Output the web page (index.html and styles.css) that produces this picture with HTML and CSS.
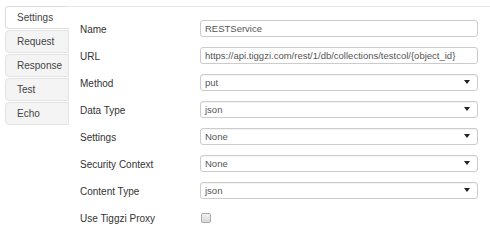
FILE: index.html
```html
<!DOCTYPE html>
<html lang="en">
<head>
    <meta charset="utf-8">
    <title>Service settings</title>
    <link rel="stylesheet" href="styles.css">
</head>
<body>
    <div class="editor">
        <ul class="tabs">
            <li class="tab active">Settings</li>
            <li class="tab">Request</li>
            <li class="tab">Response</li>
            <li class="tab">Test</li>
            <li class="tab">Echo</li>
        </ul>
        <div class="pane">
            <form class="settings">
                <label class="row">
                    <span class="name">Name</span>
                    <input class="field" type="text" value="RESTService">
                </label>
                <label class="row">
                    <span class="name">URL</span>
                    <input class="field" type="text" value="https://api.tiggzi.com/rest/1/db/collections/testcol/{object_id}">
                </label>
                <label class="row">
                    <span class="name">Method</span>
                    <span class="field select">put</span>
                </label>
                <label class="row">
                    <span class="name">Data Type</span>
                    <span class="field select">json</span>
                </label>
                <label class="row">
                    <span class="name">Settings</span>
                    <span class="field select">None</span>
                </label>
                <label class="row">
                    <span class="name">Security Context</span>
                    <span class="field select">None</span>
                </label>
                <label class="row">
                    <span class="name">Content Type</span>
                    <span class="field select">json</span>
                </label>
                <label class="row">
                    <span class="name">Use Tiggzi Proxy</span>
                    <span class="check"></span>
                </label>
            </form>
        </div>
    </div>
</body>
</html>
```

FILE: styles.css
```css
body {
    margin: 0;
    background: #fff;
    font-family: "Liberation Sans", Arial, sans-serif;
    font-size: 10px;
    color: #333;
}
.editor {
    display: flex;
    padding: 6px 0 0 5px;
}
.tabs {
    list-style: none;
    margin: 0;
    padding: 0;
    width: 64px;
    display: flex;
    flex-direction: column;
    gap: 1px;
}
.tab {
    height: 21px;
    line-height: 21px;
    padding-left: 11px;
    border: 1px solid #e3e3e3;
    border-radius: 4px 0 0 4px;
    background: #f4f4f4;
    color: #444;
}
.tab.active {
    background: #fff;
    border-color: #ddd;
    border-right-color: #fff;
    margin-right: -1px;
    position: relative;
}
.pane {
    flex: 1;
    border-top: 1px solid #e8e8e8;
    padding: 13px 12px 0 11px;
}
.settings {
    display: flex;
    flex-direction: column;
    gap: 10px;
}
.row {
    display: flex;
    align-items: center;
    height: 17px;
}
.name {
    width: 120px;
    padding-top: 1px;
    color: #333;
}
.field {
    box-sizing: border-box;
    flex: 1;
    height: 17px;
    margin: 0;
    padding: 0 4px;
    border: 1px solid #ccc;
    border-radius: 3px;
    font: inherit;
    font-size: 9.5px;
    color: #555;
    line-height: 15px;
    background: #fff;
    outline: none;
}
.select {
    position: relative;
    display: block;
    box-shadow: inset 0 1px 1px rgba(0, 0, 0, 0.05);
}
.select::after {
    content: "";
    position: absolute;
    right: 7px;
    top: 5px;
    border-left: 3px solid transparent;
    border-right: 3px solid transparent;
    border-top: 4px solid #222;
}
.check {
    box-sizing: border-box;
    width: 10px;
    height: 10px;
    margin-left: 1px;
    border: 1px solid #aaa;
    border-radius: 2px;
    background: linear-gradient(#f2f2f2, #d8d8d8);
}
```
